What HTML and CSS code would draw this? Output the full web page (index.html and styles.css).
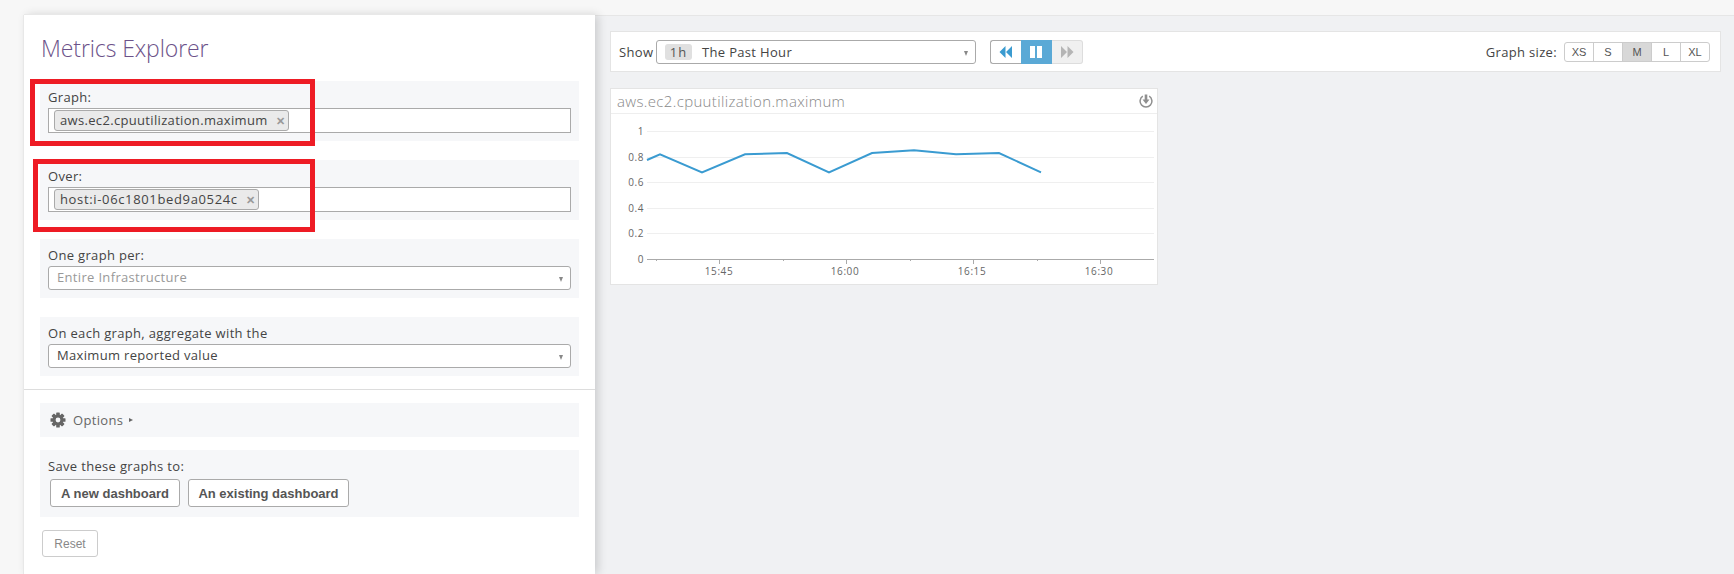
FILE: index.html
```html
<!DOCTYPE html>
<html lang="en">

<head>
    <meta charset="UTF-8">
    <title>Metrics Explorer</title>
    <link rel="stylesheet" href="styles.css">
</head>

<body>
    <div class="layout">
        <aside class="panel">
            <h1 class="panel-title">Metrics Explorer</h1>

            <section class="block block-graph">
                <label class="block-label">Graph:</label>
                <div class="tag-input">
                    <span class="tag">aws.ec2.cpuutilization.maximum<span class="tag-x">&#10005;</span></span>
                </div>
                <div class="mark mark-graph"></div>
            </section>

            <section class="block block-over">
                <label class="block-label">Over:</label>
                <div class="tag-input">
                    <span class="tag tag-host">host:i-06c1801bed9a0524c<span class="tag-x">&#10005;</span></span>
                </div>
                <div class="mark mark-over"></div>
            </section>

            <section class="block block-per">
                <label class="block-label">One graph per:</label>
                <div class="select muted">Entire Infrastructure<span class="caret"></span></div>
            </section>

            <section class="block block-agg">
                <label class="block-label">On each graph, aggregate with the</label>
                <div class="select">Maximum reported value<span class="caret"></span></div>
            </section>

            <hr class="divider">

            <section class="block block-options">
                <svg class="gear" width="16" height="16" viewBox="0 0 16 16">
                    <g fill="#666">
                        <rect x="6.2" y="0.5" width="3.6" height="15" rx="0.6"/>
                        <rect x="6.2" y="0.5" width="3.6" height="15" rx="0.6" transform="rotate(45 8 8)"/>
                        <rect x="6.2" y="0.5" width="3.6" height="15" rx="0.6" transform="rotate(90 8 8)"/>
                        <rect x="6.2" y="0.5" width="3.6" height="15" rx="0.6" transform="rotate(135 8 8)"/>
                        <circle cx="8" cy="8" r="5.4"/>
                    </g>
                    <circle cx="8" cy="8" r="2.4" fill="#f6f7f9"/>
                </svg>
                <span class="options-text">Options</span>
                <span class="options-arrow"></span>
            </section>

            <section class="block block-save">
                <label class="block-label">Save these graphs to:</label>
                <div class="save-row">
                    <button class="btn btn-new">A new dashboard</button>
                    <button class="btn btn-existing">An existing dashboard</button>
                </div>
            </section>

            <button class="btn-reset">Reset</button>
        </aside>

        <main class="content">
            <div class="toolbar">
                <span class="show-label">Show</span>
                <div class="time-select">
                    <span class="badge">1h</span>
                    <span class="time-text">The Past Hour</span>
                    <span class="caret"></span>
                </div>
                <div class="player">
                    <span class="player-btn">
                        <svg width="14" height="12" viewBox="0 0 14 12"><path d="M6.5 0v12L0.5 6zM13 0v12L7 6z" fill="#3b9bd0"/></svg>
                    </span>
                    <span class="player-btn active">
                        <svg width="12" height="12" viewBox="0 0 12 12"><path d="M0 0h5v12H0zM7 0h5v12H7z" fill="#fff"/></svg>
                    </span>
                    <span class="player-btn disabled">
                        <svg width="14" height="12" viewBox="0 0 14 12"><path d="M1 0v12l6-6zM7.500 0v12l6-6z" fill="#b5b5b5"/></svg>
                    </span>
                </div>
                <span class="size-label">Graph size:</span>
                <div class="sizes">
                    <span class="size">XS</span>
                    <span class="size">S</span>
                    <span class="size current">M</span>
                    <span class="size">L</span>
                    <span class="size">XL</span>
                </div>
            </div>

            <div class="graph-card">
                <div class="graph-head">
                    <span class="graph-title">aws.ec2.cpuutilization.maximum</span>
                    <svg class="power" width="14" height="14" viewBox="0 0 14 14">
                        <path d="M3.800 2.200a5.900 5.900 0 1 0 6.400 0" fill="none" stroke="#8f8f8f" stroke-width="1.500"/>
                        <path d="M5.700 0.500h2.600v5h2.200L7 10 3.500 5.500h2.200z" fill="#8f8f8f"/>
                    </svg>
                </div>
                <svg class="chart" width="545" height="171" viewBox="610 114 545 171">
                    <g stroke="#efefef" stroke-width="1">
                        <path d="M646 131.500H1153"/>
                        <path d="M646 157.500H1153"/>
                        <path d="M646 182.500H1153"/>
                        <path d="M646 208.500H1153"/>
                        <path d="M646 233.500H1153"/>
                    </g>
                    <path d="M646 259.500H1153" stroke="#aaa"/>
                    <g stroke="#aaa">
                        <path d="M655.500 259v2M782.500 259v2M909.500 259v2M1036.500 259v2"/>
                        <path d="M718.500 259v5M845.500 259v5M972.500 259v5M1099.500 259v5"/>
                    </g>
                    <g class="axis-y" text-anchor="end">
                        <text x="643" y="135">1</text>
                        <text x="643" y="161">0.8</text>
                        <text x="643" y="186">0.6</text>
                        <text x="643" y="212">0.4</text>
                        <text x="643" y="237">0.2</text>
                        <text x="643" y="263">0</text>
                    </g>
                    <g class="axis-x" text-anchor="middle">
                        <text x="718" y="275">15:45</text>
                        <text x="844" y="275">16:00</text>
                        <text x="971" y="275">16:15</text>
                        <text x="1098" y="275">16:30</text>
                    </g>
                    <polyline fill="none" stroke="#3a9bd1" stroke-width="2"
                        points="646,160 659,154.300 701,172.300 744,154.300 786,153 828,172.300 871,153 913,150.300 955,154.300 998,153 1040,172.300"/>
                </svg>
            </div>
        </main>
    </div>
</body>

</html>
```
FILE: styles.css
```css
* {
    box-sizing: border-box;
}

html,
body {
    margin: 0;
    padding: 0;
    height: 574px;
    overflow: hidden;
}

body {
    font-family: "Open Sans", Arial, sans-serif;
    font-size: 13px;
    letter-spacing: 0.33px;
    color: #444;
    background-color: #f7f7f7;
}

.layout {
    display: flex;
    height: 574px;
    padding-top: 15px;
    padding-left: 24px;
}

.panel {
    width: 571px;
    height: 559px;
    flex: none;
    background-color: white;
    padding: 0 16px;
    box-shadow: 0 -1px 0 #e8e8e8, -1px 0 0 #e8e8e8, 3px 0 9px rgba(0, 0, 0, 0.16);
    position: relative;
    z-index: 1;
}

.panel-title {
    margin: 18px 0 0 1px;
    height: 48px;
    font-size: 23px;
    line-height: 30px;
    font-weight: 300;
    letter-spacing: -0.1px;
    color: #6c5289;
}

.block {
    position: relative;
    background-color: #f6f7f9;
    padding: 8px 8px 0;
}

.block-graph,
.block-over {
    height: 60px;
    margin-bottom: 19px;
}

.block-per,
.block-agg {
    height: 59px;
    margin-bottom: 19px;
}

.block-agg {
    margin-bottom: 0;
}

.block-label {
    display: block;
    height: 19px;
    line-height: 16px;
    color: #444;
}

.tag-input {
    height: 25px;
    background-color: white;
    border: 1px solid #aaa;
    padding: 1px 5px;
}

.tag {
    display: inline-flex;
    align-items: center;
    height: 21px;
    padding: 0 3px 0 5px;
    background-color: #eaeaea;
    border: 1px solid #aaa;
    border-radius: 3px;
    line-height: 17px;
    color: #444;
}

.tag-host {
    letter-spacing: 0.65px;
}

.tag-x {
    margin-left: 8px;
    font-size: 11px;
    font-weight: bold;
    color: #999;
}

.mark {
    position: absolute;
    border: 5px solid #ee1c25;
    pointer-events: none;
}

.mark-graph {
    left: -10px;
    top: -2px;
    width: 285px;
    height: 67px;
}

.mark-over {
    left: -7px;
    top: -1px;
    width: 282px;
    height: 73px;
}

.select {
    position: relative;
    height: 24px;
    line-height: 21px;
    background-color: white;
    border: 1px solid #aaa;
    border-radius: 3px;
    padding-left: 8px;
    color: #444;
}

.select.muted {
    color: #999;
}

.caret {
    position: absolute;
    right: 7px;
    top: 10px;
    width: 0;
    height: 0;
    border-left: 2.5px solid transparent;
    border-right: 2.5px solid transparent;
    border-top: 5px solid #888;
}

.divider {
    margin: 13px -16px 13px;
    border: 0;
    border-top: 1px solid #ddd;
}

.block-options {
    height: 34px;
    margin-bottom: 13px;
    padding: 0 0 0 10px;
    display: flex;
    align-items: center;
}

.options-text {
    margin-left: 7px;
    color: #666;
}

.options-arrow {
    margin-left: 6px;
    width: 0;
    height: 0;
    border-top: 2.5px solid transparent;
    border-bottom: 2.5px solid transparent;
    border-left: 4px solid #666;
}

.block-save {
    height: 67px;
    margin-bottom: 13px;
}

.save-row {
    display: flex;
    gap: 8px;
    margin-left: 2px;
    margin-top: 2px;
}

.btn {
    height: 28px;
    padding: 0;
    background-color: white;
    border: 1px solid #aaa;
    border-radius: 3px;
    font-family: "Liberation Sans", Arial, sans-serif;
    font-size: 13px;
    font-weight: bold;
    color: #555;
}

.btn-new {
    width: 130px;
}

.btn-existing {
    width: 161px;
}

.btn-reset {
    display: block;
    width: 56px;
    height: 27px;
    margin-left: 2px;
    padding: 0;
    background-color: white;
    border: 1px solid #ccc;
    border-radius: 3px;
    font-family: "Liberation Sans", Arial, sans-serif;
    font-size: 12px;
    color: #888;
}

.content {
    flex: 1;
    background-color: #f0f1f3;
    border-top: 1px solid #e6e6e6;
    padding: 15px 13px 0 15px;
}

.toolbar {
    display: flex;
    align-items: center;
    height: 41px;
    padding: 0 10px 0 8px;
    background-color: white;
    border: 1px solid #e4e4e4;
}

.show-label {
    width: 37px;
    color: #444;
}

.time-select {
    position: relative;
    display: flex;
    align-items: center;
    width: 320px;
    height: 24px;
    padding-left: 8px;
    background-color: white;
    border: 1px solid #aaa;
    border-radius: 3px;
}

.badge {
    width: 27px;
    height: 16px;
    line-height: 16px;
    text-align: center;
    background-color: #e0e0e0;
    border-radius: 3px;
    letter-spacing: 1px;
    color: #555;
}

.time-text {
    margin-left: 10px;
    color: #444;
}

.player {
    display: flex;
    width: 93px;
    height: 24px;
    margin-left: 14px;
}

.player-btn {
    flex: 1;
    display: flex;
    align-items: center;
    justify-content: center;
    background-color: white;
    border: 1px solid #aaa;
    border-right: 0;
    border-radius: 3px 0 0 3px;
}

.player-btn.active {
    background-color: #5aa9d6;
    border: 0;
    border-radius: 0;
}

.player-btn.disabled {
    background-color: #f0f0f0;
    border: 1px solid #ddd;
    border-left: 0;
    border-radius: 0 3px 3px 0;
}

.size-label {
    margin-left: auto;
    margin-right: 7px;
}

.sizes {
    display: flex;
    width: 146px;
    height: 20px;
    border: 1px solid #ccc;
    border-radius: 3px;
}

.size {
    flex: 1;
    line-height: 18px;
    text-align: center;
    font-family: "Liberation Sans", Arial, sans-serif;
    font-size: 11px;
    letter-spacing: 0;
    color: #555;
    border-right: 1px solid #ccc;
}

.size:last-child {
    border-right: 0;
}

.size.current {
    background-color: #d8d8d8;
}

.graph-card {
    width: 548px;
    height: 197px;
    margin-top: 16px;
    background-color: white;
    border: 1px solid #e4e4e4;
}

.graph-head {
    display: flex;
    align-items: center;
    justify-content: space-between;
    height: 25px;
    padding: 0 4px 0 6px;
    border-bottom: 1px solid #eee;
}

.graph-title {
    font-size: 15px;
    font-weight: 300;
    letter-spacing: 0.35px;
    color: #888;
}

.chart {
    display: block;
}

.chart text {
    font-family: "Open Sans", Arial, sans-serif;
    font-size: 10px;
    letter-spacing: 0.6px;
    fill: #666;
}
```
